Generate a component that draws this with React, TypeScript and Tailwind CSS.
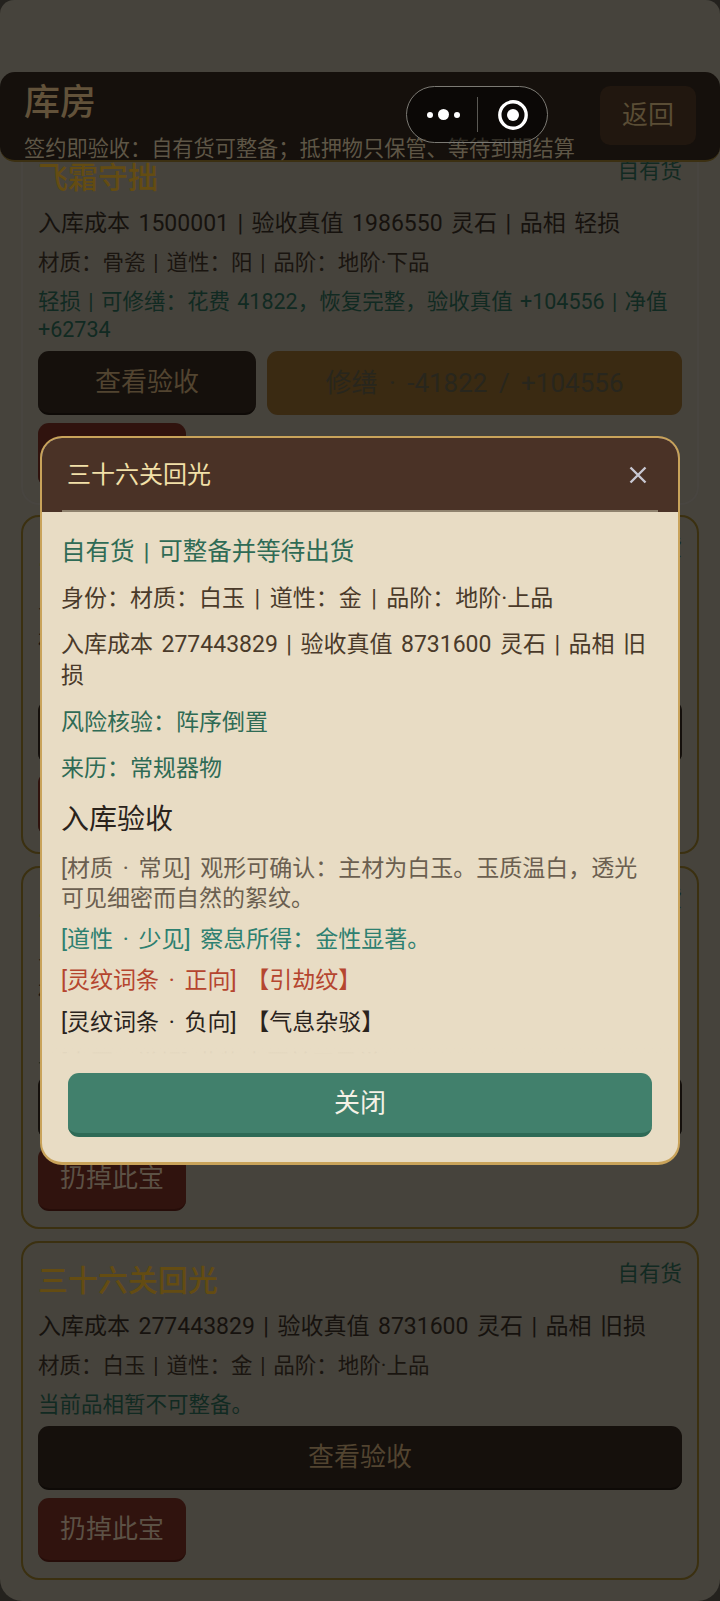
import React from 'react';

const font = { fontFamily: 'Roboto, "Noto Sans CJK SC", "Noto Sans", sans-serif' };

// full-width punctuation
const C = '\uFF1A';
const K = '\uFF0C';
const S = '\uFF1B';

interface CardProps {
  title: string;
  line1: string;
  line2: string;
  note: string;
  noteLeading?: string;
  repair?: string;
  border: string;
}

const Card: React.FC<CardProps> = ({ title, line1, line2, note, noteLeading, repair, border }) => (
  <div className={`rounded-[18px] border-2 px-[15px] pt-4 pb-4 ${border}`}>
    <div className="flex items-start justify-between">
      <span className="text-[30px] font-medium leading-[44px] text-[#644c12]">{title}</span>
      <span className="mt-[1px] text-[21.5px] leading-[28px] text-[#122a22]">自有货</span>
    </div>
    <p className="mt-[9px] text-[23px] leading-[30px] text-[#16120e] [word-spacing:2.8px]">{line1}</p>
    <p className="mt-[10px] text-[21.5px] leading-[28px] text-[#1a1510] [word-spacing:2.5px]">{line2}</p>
    <p className={`mt-[11px] text-[21.5px] text-[#112a22] [word-spacing:2px] ${noteLeading ?? 'leading-[28px]'}`}>{note}</p>
    <div className="mt-[7px] flex gap-[11px]">
      <button className="h-16 flex-1 rounded-[11px] border-b-2 border-[#0e0a07] bg-[#15100c] text-[26px] text-[#524430]">查看验收</button>
      {repair && (
        <button className="h-16 w-[415px] rounded-[11px] bg-[#3a2a12] text-[26px] text-[#28261d] [word-spacing:5px]">{repair}</button>
      )}
    </div>
    <button className="mt-2 block h-16 w-[148px] rounded-[11px] border-b-2 border-[#260d09] bg-[#30130e] text-[26px] text-[#5c5145]">扔掉此宝</button>
  </div>
);

export default function App() {
  const line1 = '入库成本 277443829 | 验收真值 8731600 灵石 | 品相 旧损';
  const line2 = `材质${C}白玉 | 道性${C}金 | 品阶${C}地阶·上品`;

  return (
    <div className="h-[1601px] w-[720px] overflow-hidden bg-[#24221e]" style={font}>
      <div className="relative h-full overflow-hidden rounded-t-[14px] rounded-b-[22px] bg-[#46433c]">
        {/* list behind the dialog */}
        <div className="flex flex-col px-[21px] pt-[138px]">
          <Card
            title="飞霜守拙"
            line1="入库成本 1500001 | 验收真值 1986550 灵石 | 品相 轻损"
            line2={`材质${C}骨瓷 | 道性${C}阳 | 品阶${C}地阶·下品`}
            note={`轻损 | 可修缮${C}花费 41822${K}恢复完整${K}验收真值 +104556 | 净值 +62734`}
            repair="修缮 · -41822 / +104556"
            border="border-[#484540]"
          />
          <div className="mt-[10px]">
            <Card title="三十六关回光" line1={line1} line2={line2} note="当前品相暂不可整备。" border="border-[#3b3010]" />
          </div>
          <div className="mt-3">
            <Card
              title="三十六关回光"
              line1={line1}
              line2={line2}
              note={`当前品相暂不可整备${K}需先查看验收${K}确认来历之后再作处置${K}暂且留在库房之中。`}
              noteLeading="leading-[26px]"
              border="border-[#3b3010]"
            />
          </div>
          <div className="mt-3">
            <Card title="三十六关回光" line1={line1} line2={line2} note="当前品相暂不可整备。" border="border-[#3b3010]" />
          </div>
        </div>

        {/* top bar, stuck over the list */}
        <div className="absolute inset-x-0 top-[72px] flex h-[90px] items-start justify-between rounded-[15px] border-b-2 border-[#3c3012] bg-[#15100c] pl-6 pr-6">
          <div>
            <h1 className="mt-2 text-[36px] font-medium leading-[46px] text-[#62523a]">库房</h1>
            <p className="mt-[9px] whitespace-nowrap text-[21.2px] leading-[28px] text-[#5e5646]">
              {`签约即验收${C}自有货可整备${S}抵押物只保管、等待到期结算`}
            </p>
          </div>
          <button className="mt-[14px] h-[59px] w-24 rounded-[10px] bg-[#21170f] text-[26px] text-[#5a4d35]">返回</button>
        </div>

        {/* wechat capsule */}
        <div className="absolute left-[406px] top-[86px] flex h-[57px] w-[142px] items-center rounded-full border-[1.5px] border-[#7c7a74] bg-black/45">
          <div className="flex w-[70px] items-center justify-center gap-[5px] pl-[2px]">
            <span className="h-[6px] w-[6px] rounded-full bg-white" />
            <span className="h-[11px] w-[11px] rounded-full bg-white" />
            <span className="h-[6px] w-[6px] rounded-full bg-white" />
          </div>
          <div className="h-[35px] w-px bg-[#5a5853]" />
          <div className="flex flex-1 items-center justify-center">
            <svg width="32" height="32" viewBox="0 0 32 32">
              <circle cx="16" cy="16" r="13.2" fill="none" stroke="#fff" strokeWidth="3.4" />
              <circle cx="16" cy="16" r="6" fill="#fff" />
            </svg>
          </div>
        </div>

        {/* dialog */}
        <div className="absolute inset-0 flex items-center justify-center">
          <div className="flex w-[640px] flex-col overflow-hidden rounded-[22px] border-2 border-b-[3px] border-[#c9a35a] bg-[#e8dcc4]">
            <div className="relative flex h-[74px] items-center justify-between bg-[#4a3226] pl-[25px] pr-[31px]">
              <span className="text-[24px] text-[#f2e0a8]">三十六关回光</span>
              <svg width="18" height="18" viewBox="0 0 18 18" className="-mt-[1px]">
                <path d="M1.5 1.5 16.5 16.5M16.5 1.5 1.5 16.5" stroke="#c8c8d2" strokeWidth="2.4" fill="none" />
              </svg>
              <div className="absolute inset-x-5 bottom-0 h-[2px] bg-[#8f826e]" />
            </div>

            <div className="relative h-[542px] overflow-hidden pl-[19px] pr-5 pt-6 text-[23px] leading-[31px] text-[#4a3a2a] [word-spacing:2.8px]">
              <p className="text-[24.5px] text-[#2f6b55]">自有货 | 可整备并等待出货</p>
              <p className="mt-4 [word-spacing:3.8px]">{`身份${C}${line2}`}</p>
              <p className="mt-[15px]">{line1}</p>
              <p className="mt-4 text-[#2f6b55]">{`风险核验${C}阵序倒置`}</p>
              <p className="mt-[15px] text-[#2f6b55]">{`来历${C}常规器物`}</p>
              <h2 className="mt-[18px] text-[28px] leading-[36px] text-[#2a231c]">入库验收</h2>
              <p className="mt-4 leading-[30px] text-[#6b5f50] [word-spacing:4px]">
                {`[材质 · 常见] 观形可确认${C}主材为白玉。玉质温白${K}透光`}
                <br />
                可见细密而自然的絮纹。
              </p>
              <p className="mt-[11px] leading-[30px] text-[#2e8070] [word-spacing:4px]">{`[道性 · 少见] 察息所得${C}金性显著。`}</p>
              <p className="mt-[11px] leading-[30px] text-[#b5452f] [word-spacing:4px]">[灵纹词条 · 正向] 【引劫纹】</p>
              <p className="mt-3 leading-[30px] text-[#2a231c] [word-spacing:4px]">[灵纹词条 · 负向] 【气息杂驳】</p>
              <p className="mt-[11px] leading-[30px] text-[#6b5f50]">[来历 · 常规] 此物来历并无异常。</p>
              <div className="absolute inset-x-0 bottom-0 h-[12px] bg-gradient-to-b from-[#e8dcc4]/60 to-[#e8dcc4]" />
            </div>

            <div className="px-[26px] pt-[19px] pb-[25px]">
              <button className="h-16 w-full rounded-[11px] border-b-4 border-[#2e6a56] bg-[#41806c] text-[26px] text-[#f5f1e6]">关闭</button>
            </div>
          </div>
        </div>
      </div>
    </div>
  );
}
